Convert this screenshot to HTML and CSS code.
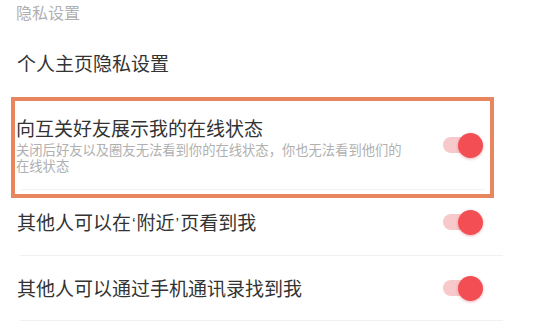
FILE: index.html
```html
<!DOCTYPE html>
<html lang="zh">
<head>
<meta charset="utf-8">
<link rel="stylesheet" href="styles.css">
</head>
<body>
<div class="page">
  <div class="section-title">隐私设置</div>
  <div class="row row-plain">个人主页隐私设置</div>
  <div class="highlight">
    <div class="item">
      <div class="item-text">
        <div class="item-title">向互关好友展示我的在线状态</div>
        <div class="item-desc">关闭后好友以及圈友无法看到你的在线状态，你也无法看到他们的在线状态</div>
      </div>
      <div class="toggle"><span class="knob"></span></div>
    </div>
    <div class="inner-sep"></div>
  </div>
  <div class="row row-switch first">
    <span class="row-label">其他人可以在<span class="quote">‘</span>附近<span class="quote">’</span>页看到我</span>
    <div class="toggle"><span class="knob"></span></div>
  </div>
  <div class="sep"></div>
  <div class="row row-switch second">
    <span class="row-label">其他人可以通过手机通讯录找到我</span>
    <div class="toggle"><span class="knob"></span></div>
  </div>
  <div class="sep"></div>
</div>
</body>
</html>
```

FILE: styles.css
```css
* { box-sizing: border-box; }
html, body { margin: 0; padding: 0; background: #ffffff; }
body {
  width: 541px;
  height: 325px;
  overflow: hidden;
  font-family: "Noto Sans CJK SC", "Noto Sans", sans-serif;
}
.page { display: flex; flex-direction: column; }

.section-title {
  height: 24px;
  padding-left: 16px;
  font-size: 16px;
  line-height: 24px;
  color: #b0b0b0;
}

.row {
  padding-left: 17px;
  font-size: 19px;
  line-height: 24px;
  color: #333333;
}
.row-plain {
  height: 73px;
  padding-top: 27px;
  padding-bottom: 22px;
}
.row-label {
  display: block;
  height: 24px;
  overflow: visible;
  white-space: nowrap;
}
.quote {
  font-family: "Liberation Sans", "DejaVu Sans", sans-serif;
  font-size: 16px;
  line-height: 16px;
  padding: 0 1px;
}

.highlight {
  margin-left: 11px;
  width: 483px;
  height: 101px;
  border: 4px solid #e8875f;
  display: flex;
  flex-direction: column;
}
.item {
  display: flex;
  align-items: center;
  padding: 15px 7px 15px 1px;
}
.item-text { flex: 1; }
.item-title {
  height: 24px;
  font-size: 19px;
  line-height: 24px;
  color: #333333;
}
.item-desc {
  margin-top: 2px;
  width: 390px;
  height: 32px;
  font-size: 13.3px;
  line-height: 16px;
  color: #b0b0b0;
}
.inner-sep {
  height: 1px;
  margin: 0 5px 4px 6px;
  background: #f3f3f3;
}

.row-switch {
  display: flex;
  align-items: center;
  justify-content: space-between;
  padding-right: 58px;
}
.row-switch.first { height: 57px; padding-top: 12px; padding-bottom: 21px; }
.row-switch.second { height: 64px; padding-top: 20px; padding-bottom: 20px; }

.sep {
  height: 1px;
  flex: none;
  margin: 0 38px 0 20px;
  background: #f1f1f1;
}

.toggle {
  position: relative;
  width: 40px;
  height: 24px;
  flex: none;
}
.toggle::before {
  content: "";
  position: absolute;
  left: 0;
  top: 4px;
  width: 36px;
  height: 16px;
  border-radius: 8px;
  background: #f8c9cb;
}
.knob {
  position: absolute;
  right: 0;
  top: -0.5px;
  width: 25px;
  height: 25px;
  border-radius: 50%;
  background: #f24e53;
  box-shadow: 0 1px 3px rgba(200, 40, 50, 0.35);
}
```
